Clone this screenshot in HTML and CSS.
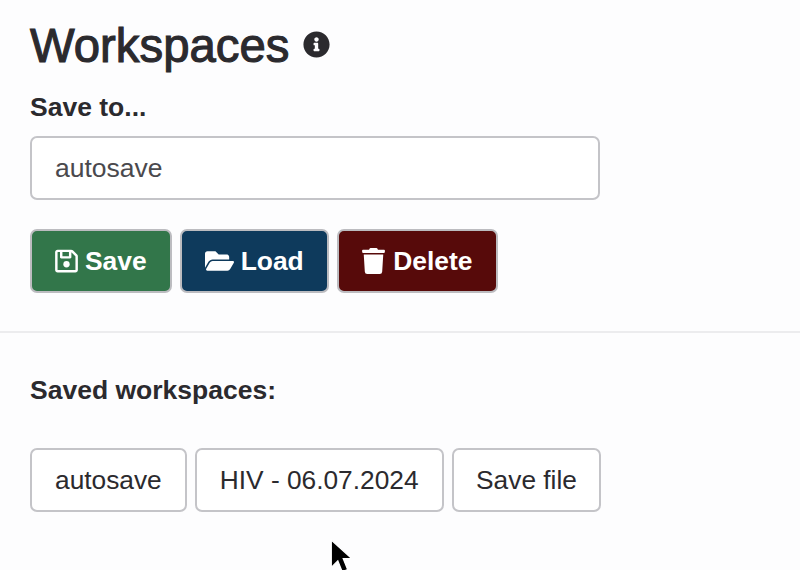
FILE: index.html
```html
<!DOCTYPE html>
<html lang="en">
<head>
    <meta charset="UTF-8">
    <meta name="viewport" content="width=device-width, initial-scale=1.0">
    <title>Workspaces</title>
    <link rel="stylesheet" href="styles.css">
</head>
<body>
    <div class="panel">
        <h1 class="title">Workspaces
            <svg class="info-icon" viewBox="0 0 512 512"><path d="M256 8C119.043 8 8 119.083 8 256c0 136.997 111.043 248 248 248s248-111.003 248-248C504 119.083 392.957 8 256 8zm0 110c23.196 0 42 18.804 42 42s-18.804 42-42 42-42-18.804-42-42 18.804-42 42-42zm56 254c0 6.627-5.373 12-12 12h-88c-6.627 0-12-5.373-12-12v-24c0-6.627 5.373-12 12-12h12v-64h-12c-6.627 0-12-5.373-12-12v-24c0-6.627 5.373-12 12-12h64c6.627 0 12 5.373 12 12v100h12c6.627 0 12 5.373 12 12v24z"/></svg>
        </h1>
        <label class="field-label" for="saveName">Save to...</label>
        <input class="field-input" id="saveName" type="text" value="autosave">
        <div class="actions">
            <button class="btn btn-save">
                <svg class="btn-icon" viewBox="0 0 448 512"><path d="M433.941 129.941l-83.882-83.882A48 48 0 0 0 316.118 32H48C21.49 32 0 53.49 0 80v352c0 26.51 21.49 48 48 48h352c26.51 0 48-21.49 48-48V163.882a48 48 0 0 0-14.059-33.941zM272 80v80H144V80h128zm122 352H54a6 6 0 0 1-6-6V86a6 6 0 0 1 6-6h42v104c0 13.255 10.745 24 24 24h176c13.255 0 24-10.745 24-24V83.882l78.243 78.243a6 6 0 0 1 1.757 4.243V426a6 6 0 0 1-6 6z"/><circle cx="224" cy="320" r="62"/></svg>
                Save
            </button>
            <button class="btn btn-load">
                <svg class="btn-icon btn-icon-wide" viewBox="0 0 576 512"><path d="M572.694 292.093L500.27 416.248A63.997 63.997 0 0 1 444.989 448H45.025c-18.523 0-30.064-20.093-20.731-36.093l72.424-124.155A64 64 0 0 1 152 256h399.964c18.523 0 30.064 20.093 20.73 36.093zM152 224h328v-48c0-26.51-21.49-48-48-48H272l-64-64H48C21.49 64 0 85.49 0 112v278.046l69.077-118.418C86.214 242.25 117.989 224 152 224z"/></svg>
                Load
            </button>
            <button class="btn btn-delete">
                <svg class="btn-icon" viewBox="0 0 448 512"><path d="M432 32H312l-9.4-18.7A24 24 0 0 0 281.1 0H166.8a23.72 23.72 0 0 0-21.4 13.3L136 32H16A16 16 0 0 0 0 48v32a16 16 0 0 0 16 16h416a16 16 0 0 0 16-16V48a16 16 0 0 0-16-16zM53.2 467a48 48 0 0 0 47.9 45h245.8a48 48 0 0 0 47.9-45L416 128H32z"/></svg>
                Delete
            </button>
        </div>
    </div>
    <hr class="divider">
    <div class="panel">
        <p class="field-label saved-label">Saved workspaces:</p>
        <div class="saved-list">
            <button class="btn-plain">autosave</button>
            <button class="btn-plain">HIV - 06.07.2024</button>
            <button class="btn-plain btn-file">Save file</button>
        </div>
    </div>
    <svg class="cursor" viewBox="0 0 20 32"><path d="M2 1v25l6-6 4 10 5-2-4-10h8z" fill="#000" stroke="#fff" stroke-width="1.2"/></svg>
</body>
</html>
```
FILE: styles.css
```css
body {
    margin: 0;
    height: 570px;
    overflow: hidden;
    position: relative;
    background: #fdfdfe;
    color: #2b2a2e;
    font-family: "Liberation Sans", Arial, sans-serif;
}
.panel {
    padding-left: 30px;
}
.title {
    margin: 0;
    padding-top: 19px;
    font-size: 47.3px;
    line-height: 53px;
    font-weight: normal;
    -webkit-text-stroke: 1.1px #2b2a2e;
    display: flex;
    align-items: center;
    gap: 14px;
}
.info-icon {
    width: 27px;
    height: 27px;
    margin-top: -2px;
    fill: #2b2a2e;
}
.field-label {
    display: block;
    margin-top: 20px;
    font-size: 26.5px;
    line-height: 30px;
    font-weight: bold;
}
.field-input {
    display: block;
    box-sizing: border-box;
    width: 570px;
    height: 64px;
    margin-top: 14px;
    padding: 0 23px;
    border: 2px solid #c4c4c8;
    border-radius: 7px;
    background: #fff;
    color: #4a494d;
    font-family: inherit;
    font-size: 26.5px;
}
.actions {
    display: flex;
    gap: 8px;
    margin-top: 29px;
}
.btn {
    display: flex;
    align-items: center;
    justify-content: center;
    gap: 7px;
    box-sizing: border-box;
    height: 64px;
    padding: 0 23px;
    border: 2px solid #bcbcc0;
    border-radius: 7px;
    color: #fff;
    font-family: inherit;
    font-size: 26.4px;
    font-weight: bold;
}
.btn-icon {
    width: 23px;
    height: 26px;
    fill: #fff;
}
.btn-icon-wide {
    width: 29px;
}
.btn-save {
    background: #32764a;
}
.btn-load {
    background: #0e3a5c;
}
.btn-delete {
    gap: 8px;
    padding: 0 23.5px;
    background: #570a0a;
}
.divider {
    margin: 38px 0 0;
    border: 0;
    border-top: 2px solid #ececee;
}
.saved-label {
    margin: 42px 0 0;
}
.saved-list {
    display: flex;
    gap: 8px;
    margin-top: 43px;
}
.btn-plain {
    box-sizing: border-box;
    height: 64px;
    padding: 0 23px;
    border: 2px solid #c4c4c8;
    border-radius: 7px;
    background: #fff;
    color: #2b2a2e;
    font-family: inherit;
    font-size: 26.3px;
}
.btn-file {
    padding: 0 22.5px;
}
.cursor {
    position: absolute;
    left: 329px;
    top: 539px;
    width: 22px;
    height: 35px;
}
```
